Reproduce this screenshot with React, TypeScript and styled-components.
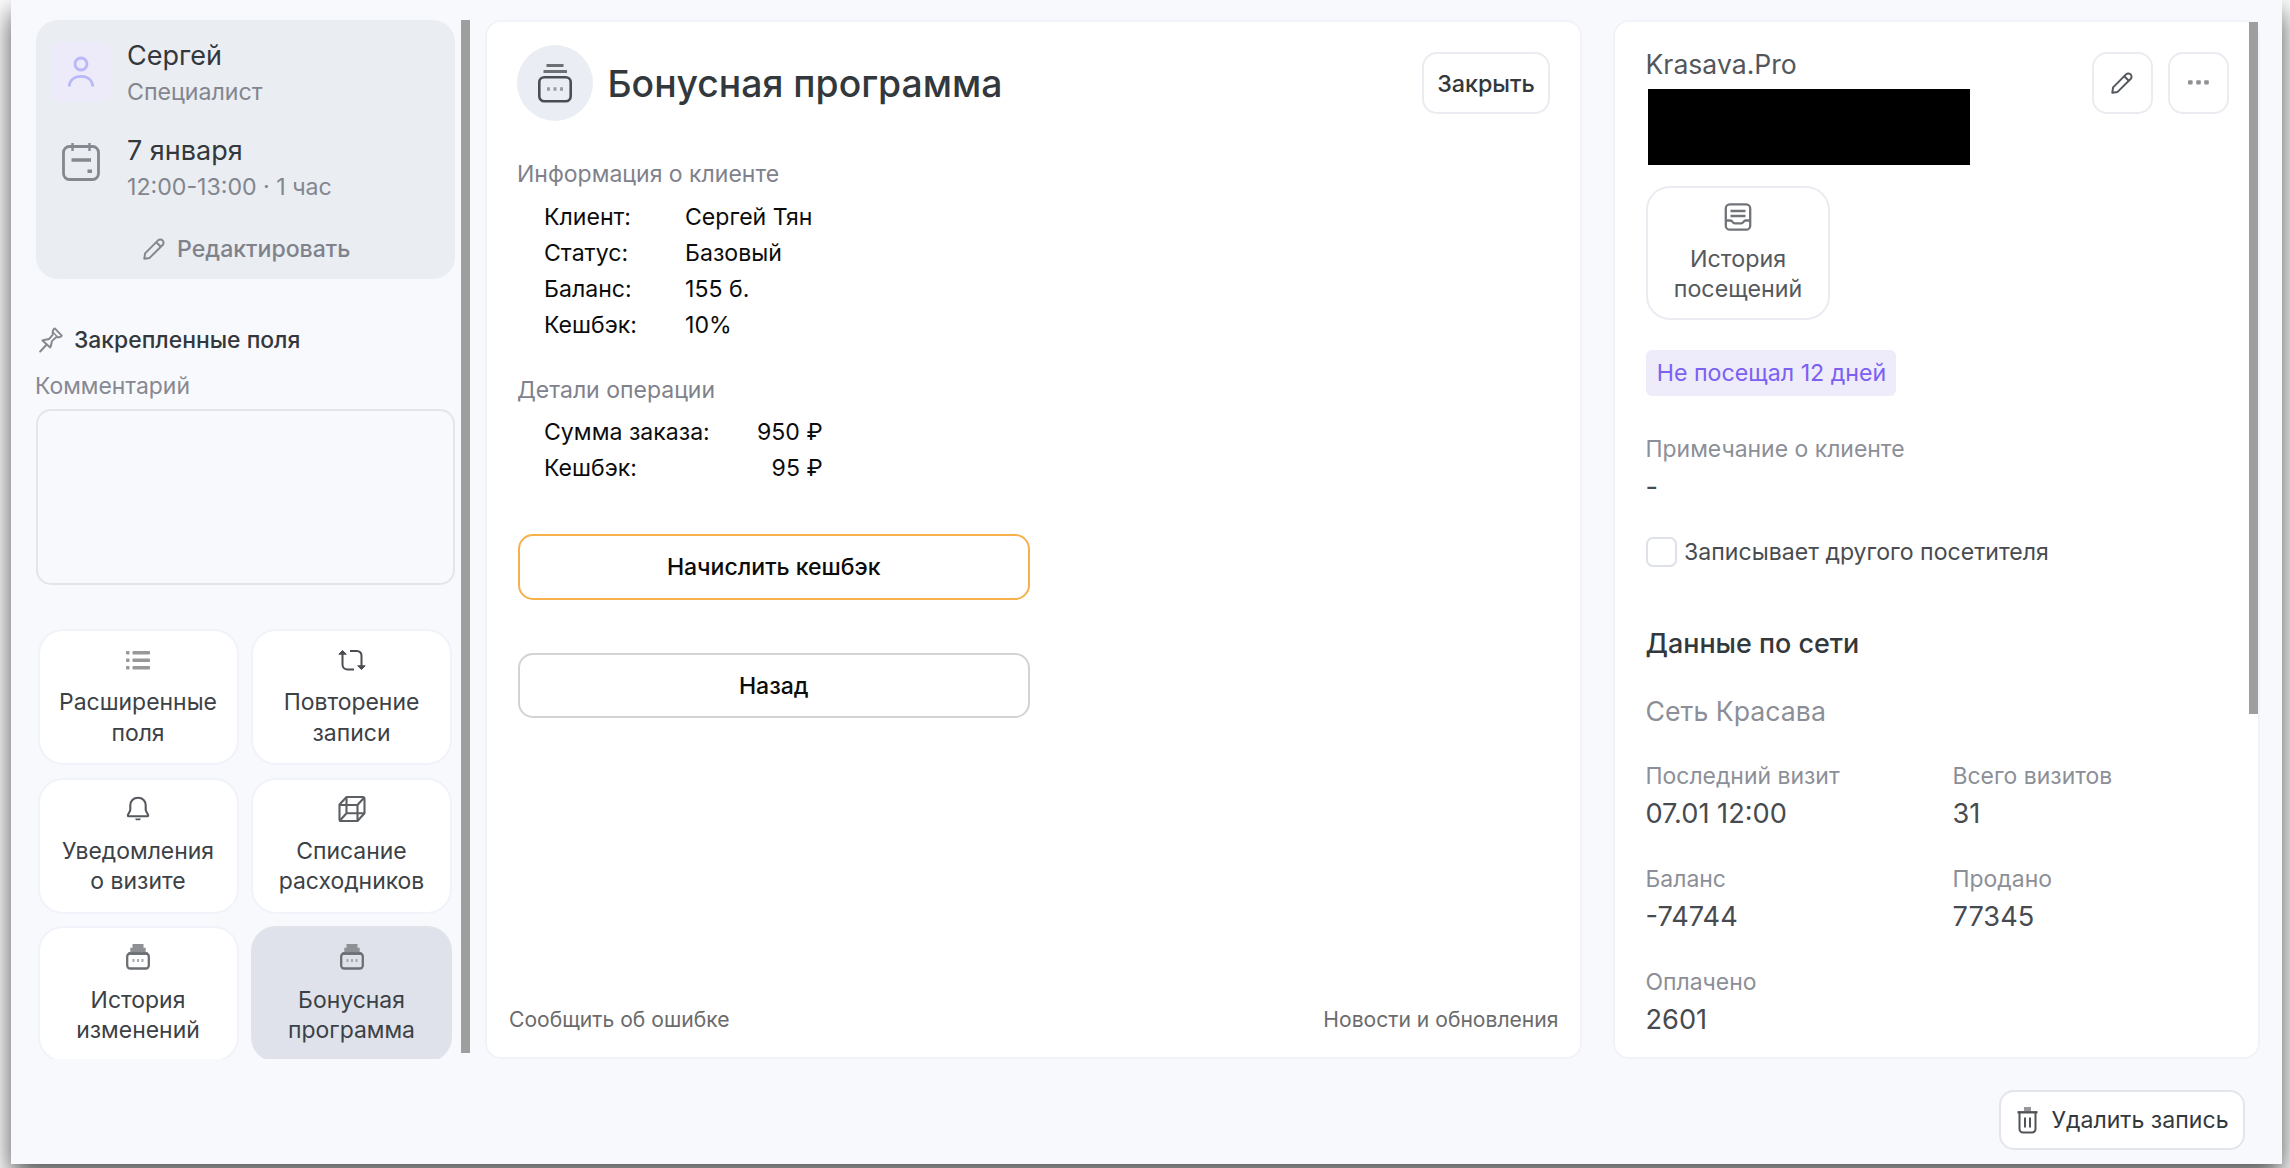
import React from "react";
import styled, { createGlobalStyle, css } from "styled-components";

const GlobalStyle = createGlobalStyle`
  * { box-sizing: border-box; }
  body {
    margin: 0;
    background: #fff;
    overflow: hidden;
    font-family: Inter, "Liberation Sans", sans-serif;
    color: #33383c;
  }
  button { font: inherit; color: inherit; margin: 0; padding: 0; }
`;

const Page = styled.div`
  height: 1168px;
  padding-left: 11px;
  overflow: hidden;
`;

const Window = styled.div`
  width: 2271px;
  height: 1164px;
  padding: 20px 22px 0 25px;
  background: #f8f9fd;
  box-shadow: 0 12px 26px rgba(0, 0, 0, 0.7);
`;

const Columns = styled.div`
  display: flex;
  height: 1039px;
`;

/* ---------- left column ---------- */

const Sidebar = styled.aside`
  display: flex;
  width: 434px;
  margin-right: 15px;
  overflow: hidden;
`;

const SidebarContent = styled.div`
  width: 418.5px;
  flex: none;
`;

const Scrollbar = styled.div<{ $height: number }>`
  flex: none;
  width: 9px;
  height: ${(p) => p.$height}px;
  margin-left: auto;
  background: #9e9e9e;
`;

const VisitCard = styled.section`
  height: 259px;
  padding: 16.5px 15px 0;
  border-radius: 22px;
  background: #eaedf2;
`;

const VisitRow = styled.div`
  display: flex;
  align-items: center;
  gap: 16px;
  height: 74.8px;
  & + & { margin-top: 20.5px; }
`;

const IconCell = styled.div<{ $tinted?: boolean }>`
  display: flex;
  align-items: center;
  justify-content: center;
  width: 60px;
  height: 60px;
  margin-bottom: ${(p) => (p.$tinted ? 3 : 15)}px;
  border-radius: 8px;
  background: ${(p) => (p.$tinted ? "#edebfa" : "transparent")};
`;

const RowTitle = styled.div`
  font-size: 27px;
  line-height: 37.4px;
`;

const RowNote = styled.div`
  font-size: 23.15px;
  line-height: 37.4px;
  color: #83868f;
`;

const EditLink = styled.button`
  display: flex;
  align-items: center;
  justify-content: center;
  gap: 12px;
  width: 100%;
  margin-top: 27px;
  padding-left: 3px;
  border: 0;
  background: none;
  font-size: 23.1px;
  font-weight: 500;
  line-height: 30px;
  color: #7f828b;
`;

const PinnedTitle = styled.h3`
  display: flex;
  align-items: center;
  gap: 11px;
  margin: 45.6px 0 0 3px;
  font-size: 22.9px;
  font-weight: 500;
  line-height: 30px;
`;

const FieldLabel = styled.label`
  display: block;
  margin: 16px 0 8.4px -1px;
  font-size: 22.9px;
  line-height: 30px;
  color: #868991;
`;

const CommentBox = styled.textarea`
  display: block;
  width: 100%;
  height: 176px;
  border: 2px solid #e3e5ea;
  border-radius: 15px;
  background: transparent;
  resize: none;
  outline: none;
`;

const Tiles = styled.div`
  display: grid;
  grid-template-columns: 201px 201px;
  grid-auto-rows: 136px;
  gap: 12.7px 12.500px;
  margin: 44px 0 0 1.500px;
`;

const tileText = css`
  display: flex;
  flex-direction: column;
  align-items: center;
  text-align: center;
  line-height: 30.2px;
`;

const Tile = styled.button<{ $active?: boolean }>`
  ${tileText}
  padding-top: 14px;
  border: 2px solid ${(p) => (p.$active ? "#e0e3ea" : "#f0f3f9")};
  border-radius: 25px;
  background: ${(p) => (p.$active ? "#dfe2ea" : "#fff")};
  font-size: 22.95px;
  color: #3c4145;
  svg { margin-bottom: 12.4px; }
`;

/* ---------- shared ---------- */

const Panel = styled.section`
  border: 2px solid #f1f3f9;
  border-radius: 16px;
  background: #fff;
`;

const OutlineButton = styled.button<{ $width: number }>`
  display: flex;
  flex: none;
  align-items: center;
  justify-content: center;
  width: ${(p) => p.$width}px;
  height: 61.5px;
  border: 2px solid #ebebf1;
  border-radius: 15px;
  background: #fff;
  font-size: 23.3px;
  font-weight: 500;
`;

/* ---------- centre panel ---------- */

const BonusPanel = styled(Panel)`
  display: flex;
  flex-direction: column;
  width: 1097px;
  margin-right: 30.5px;
  padding: 23px 30px 0;
`;

const BonusHeader = styled.header`
  display: flex;
  align-items: center;
  height: 76px;
`;

const RoundIcon = styled.div`
  display: flex;
  align-items: center;
  justify-content: center;
  width: 76px;
  height: 76px;
  margin-right: 14.5px;
  border-radius: 50%;
  background: #eaedf3;
`;

const BonusTitle = styled.h1`
  flex: 1;
  margin: 0;
  padding-top: 1px;
  font-size: 37.3px;
  font-weight: 500;
  line-height: 46px;
`;

const SectionTitle = styled.h2<{ $top: number; $bottom: number }>`
  margin: ${(p) => p.$top}px 0 ${(p) => p.$bottom}px 0;
  font-size: 23px;
  font-weight: 400;
  line-height: 36px;
  color: #7f828c;
`;

const Facts = styled.dl<{ $labels: number; $end?: boolean }>`
  display: grid;
  grid-template-columns: ${(p) => p.$labels}px auto;
  justify-content: start;
  margin: 0 0 0 27px;
  font-size: 23.1px;
  line-height: 35.8px;
  color: #0c0c0c;
  dt, dd { margin: 0; text-align: left; }
  dd { text-align: ${(p) => (p.$end ? "right" : "left")}; }
`;

const WideButton = styled.button<{ $accent?: boolean }>`
  width: 511.5px;
  height: 65.5px;
  border: 2px solid ${(p) => (p.$accent ? "#f6b04c" : "#d3d3d4")};
  border-radius: 15px;
  background: #fff;
  font-size: 23.05px;
  font-weight: 500;
  color: #0c0c0c;
`;

const Actions = styled.div`
  display: flex;
  flex-direction: column;
  gap: 53px;
  margin: 47.2px 0 0 1px;
`;

const BonusFooter = styled.footer`
  display: flex;
  justify-content: space-between;
  margin: auto -8.5px 22px -8px;
  font-size: 21.1px;
  line-height: 30px;
  color: #6b6b6b;
`;

/* ---------- right panel ---------- */

const ClientPanel = styled(Panel)`
  display: flex;
  width: 647px;
`;

const ClientBody = styled.div`
  width: 614px;
  padding: 25px 0 0 31px;
`;

const ClientHeader = styled.header`
  display: flex;
  justify-content: space-between;
`;

const ClientName = styled.div`
  height: 34px;
  font-size: 26.6px;
  line-height: 34px;
  color: #53575b;
`;

const Redacted = styled.div`
  width: 322px;
  height: 76px;
  margin: 8px 0 0 2.5px;
  background: #000;
`;

const HeaderButtons = styled.div`
  display: flex;
  gap: 15px;
  margin-top: 5px;
`;

const HistoryButton = styled.button`
  ${tileText}
  width: 184px;
  height: 134px;
  margin: 21px 0 0 0.5px;
  padding-top: 14px;
  border: 2px solid #ebebf2;
  border-radius: 24px;
  background: #fff;
  font-size: 23.25px;
  color: #55595d;
  svg { margin-bottom: 12px; }
`;

const Tag = styled.span`
  display: block;
  width: 250px;
  height: 46px;
  margin: 30px 0 0 0.5px;
  padding-left: 1px;
  border-radius: 6px;
  background: #eeebfb;
  font-size: 23.2px;
  line-height: 46px;
  text-align: center;
  color: #7b60f2;
`;

const Label = styled.div`
  font-size: 22.95px;
  line-height: 34px;
  color: #8c8f97;
`;

const Value = styled.div`
  font-size: 27.2px;
  line-height: 42.6px;
  color: #474b4f;
`;

const NoteBlock = styled.div`
  margin-top: 35.5px;
`;

const CheckRow = styled.label`
  display: flex;
  align-items: center;
  gap: 7.5px;
  height: 31px;
  margin: 28.5px 0 0 0.5px;
  font-size: 23.1px;
  color: #484c50;
`;

const Checkbox = styled.span`
  width: 30.5px;
  height: 30.5px;
  border: 2px solid #dfe1e9;
  border-radius: 7px;
`;

const NetworkTitle = styled.h2`
  margin: 58.5px 0 0;
  font-size: 26.9px;
  font-weight: 500;
  line-height: 34px;
`;

const NetworkName = styled.div`
  margin-top: 34px;
  font-size: 26.7px;
  line-height: 34px;
  color: #8c8f97;
`;

const Stats = styled.div`
  display: grid;
  grid-template-columns: 307px 1fr;
  row-gap: 26.2px;
  margin-top: 31px;
`;

/* ---------- bottom ---------- */

const BottomBar = styled.footer`
  display: flex;
  justify-content: flex-end;
  margin: 30.5px 15.5px 0 0;
`;

const DeleteButton = styled(OutlineButton)`
  height: 60px;
  gap: 13px;
  padding-left: 3px;
  border-color: #e4e5ec;
  font-size: 23.1px;
  font-weight: 400;
`;

/* ---------- icons ---------- */

const PersonIcon = () => (
  <svg width="28" height="32" viewBox="0 0 28 32" fill="none" stroke="#b9b7f8" strokeWidth="2.8">
    <circle cx="14" cy="8" r="6" />
    <path d="M2.2 30.5C2.6 24 7.5 20.3 14 20.3S25.4 24 25.8 30.5" />
  </svg>
);

const CalendarIcon = () => (
  <svg width="38" height="40" viewBox="0 0 38 40" fill="none" stroke="#85888f" strokeWidth="2.8">
    <rect x="1.5" y="4.5" width="35" height="33" rx="6" />
    <path d="M10.5 1v8M27.5 1v8" strokeWidth="2.4" />
    <path d="M9.5 18h19.5" strokeWidth="3.5" />
    <rect x="25.5" y="27.5" width="4.5" height="3.5" fill="#85888f" stroke="none" />
  </svg>
);

const PencilIcon = ({ color }: { color: string }) => (
  <svg width="22" height="22" viewBox="0 0 22 22" fill="none" stroke={color} strokeWidth="2" strokeLinejoin="round">
    <path d="M1.300 20.700l.8-5.300L15 2.400a3.200 3.200 0 0 1 4.600 4.600L6.600 19.900z" />
    <path d="M13.300 4.200l4.500 4.500" />
  </svg>
);

const PinIcon = () => (
  <svg width="24" height="26" viewBox="0 0 24 26" fill="none" stroke="#85888f" strokeWidth="2" strokeLinejoin="round" strokeLinecap="round">
    <path d="M1.200 24.500l6-6.500M3.500 13.500c3-1.200 5.600-.8 6.700-1.600l3.200-3.800c.8-1.100 0-2.200.5-4 .3-1.300 1.100-2.500 1.900-2.700l6.900 7.200c-.3.800-1.500 1.500-2.600 1.700-1.600.3-2.500-.6-3.500.3l-3.400 3.300c-1 1.100-.4 3.900-2 6.500z" />
    <path d="M13.800 5l5 5.200" strokeWidth="1.400" />
  </svg>
);

const ListIcon = () => (
  <svg width="24" height="30" viewBox="0 0 24 30" fill="#96989a">
    {[6, 13.5, 21].map((y) => (
      <React.Fragment key={y}>
        <rect x="0" y={y} width="3.5" height="3.5" rx=".8" />
        <rect x="6.5" y={y} width="17.5" height="3.5" rx=".8" />
      </React.Fragment>
    ))}
  </svg>
);

const RepeatIcon = () => (
  <svg width="28" height="30" viewBox="0 0 28 30" fill="none" stroke="#4a4e52" strokeWidth="2">
    <path d="M4.500 7v12.500a5 5 0 0 0 5 5H16" />
    <path d="M12 6h7a4.500 4.500 0 0 1 4.500 4.500V23" />
    <path d="M.8 9.200L4.500 5.500l3.800 3.700zM19.700 20.800l3.800 3.700 3.700-3.700z" fill="#4a4e52" strokeWidth="1" />
  </svg>
);

const BellIcon = () => (
  <svg width="24" height="30" viewBox="0 0 24 30" fill="none" stroke="#55595d" strokeWidth="2.1" strokeLinejoin="round">
    <path d="M12 3.800c-4.800 0-7.700 3.200-7.700 7.500v4.500c0 1.800-2.500 4.200-2.500 5.600 0 .6.600.9 1.300.9h17.800c.7 0 1.300-.3 1.300-.9 0-1.400-2.500-3.800-2.500-5.600v-4.500c0-4.300-2.900-7.500-7.700-7.500z" />
    <path d="M9 24.500h6l-1 1.800h-4z" fill="#55595d" stroke="none" />
  </svg>
);

const CubeIcon = () => (
  <svg width="28" height="30" viewBox="0 0 28 30" fill="none" stroke="#5c6064" strokeWidth="2.1" strokeLinejoin="round">
    <path d="M1.500 10.500L8.500 3H25a1.500 1.500 0 0 1 1.500 1.500v14.700L19.500 27H3a1.500 1.500 0 0 1-1.500-1.500z" />
    <path d="M1.500 11h18v16M19.500 11L26 3.800M8.500 3.500v15.700h18M8.500 19.200L2 26.500" />
  </svg>
);

const JarIcon = () => (
  <svg width="24" height="30" viewBox="0 0 24 30" fill="none">
    <path d="M6.500 2h11v3.800h2.200v4.200h2v3h-19.400v-3h2V5.800h2.200z" fill="#8e9093" />
    <rect x="1.200" y="11.500" width="21.600" height="15" rx="3" stroke="#6b6f73" strokeWidth="2.300" />
    <path d="M6.500 18.500h2M11 18.500h2M15.500 18.500h2" stroke="#a6a8aa" strokeWidth="3.200" />
  </svg>
);

const JarIconLarge = () => (
  <svg width="34" height="40" viewBox="0 0 34 40" fill="none" stroke="#4a4e52">
    <path d="M8.500 2.500h17M5.500 8.500h23.500" strokeWidth="3.200" stroke="#6c6f73" />
    <rect x="1.300" y="14.300" width="31.400" height="24" rx="5" strokeWidth="2.600" />
    <path d="M9 26h3M15.500 26h3M22 26h3" strokeWidth="3.400" stroke="#9b9da1" />
  </svg>
);

const InboxIcon = () => (
  <svg width="28" height="30" viewBox="0 0 28 30" fill="none" stroke="#707377" strokeWidth="2.300">
    <rect x="1.800" y="2.300" width="24.400" height="25.400" rx="4" />
    <path d="M6.500 9h15M6.500 14h15" />
    <path d="M2 18.500h4.500c2 0 2 2.800 4.200 2.800h2.600c2.200 0 2.200 0 4 0 2.200 0 2.200-2.800 4.200-2.800H26" />
  </svg>
);

const DotsIcon = () => (
  <svg width="21" height="5" viewBox="0 0 21 5" fill="#8f9194">
    <rect x="0" y=".3" width="4.600" height="4.300" rx="1" />
    <rect x="8.200" y=".3" width="4.600" height="4.300" rx="1" />
    <rect x="16.200" y=".3" width="4.600" height="4.300" rx="1" />
  </svg>
);

const TrashIcon = () => (
  <svg width="21" height="28" viewBox="0 0 21 28" fill="none" stroke="#505458" strokeWidth="2">
    <rect x="7" y="1" width="7" height="4.500" fill="#96989a" stroke="none" />
    <path d="M.5 6.300h20" strokeWidth="2.400" />
    <path d="M2.500 6.500v16.500a3.500 3.500 0 0 0 3.500 3.500h9a3.500 3.500 0 0 0 3.500-3.500V6.500" />
    <path d="M8 11.500v10M13 11.500v10" />
  </svg>
);

const tiles: { lines: [string, string]; icon: React.ReactNode; active?: boolean }[] = [
  { lines: ["Расширенные", "поля"], icon: <ListIcon /> },
  { lines: ["Повторение", "записи"], icon: <RepeatIcon /> },
  { lines: ["Уведомления", "о визите"], icon: <BellIcon /> },
  { lines: ["Списание", "расходников"], icon: <CubeIcon /> },
  { lines: ["История", "изменений"], icon: <JarIcon /> },
  { lines: ["Бонусная", "программа"], icon: <JarIcon />, active: true },
];

const clientFacts = [
  ["Клиент:", "Сергей Тян"],
  ["Статус:", "Базовый"],
  ["Баланс:", "155 б."],
  ["Кешбэк:", "10%"],
];

const operationFacts = [
  ["Сумма заказа:", "950 ₽"],
  ["Кешбэк:", "95 ₽"],
];

const stats = [
  ["Последний визит", "07.01 12:00"],
  ["Всего визитов", "31"],
  ["Баланс", "-74744"],
  ["Продано", "77345"],
  ["Оплачено", "2601"],
];

const FactList = ({ rows }: { rows: string[][] }) => (
  <>
    {rows.map(([name, value]) => (
      <React.Fragment key={name}>
        <dt>{name}</dt>
        <dd>{value}</dd>
      </React.Fragment>
    ))}
  </>
);

export default function App() {
  return (
    <Page>
      <GlobalStyle />
      <Window>
        <Columns>
          <Sidebar>
            <SidebarContent>
              <VisitCard>
                <VisitRow>
                  <IconCell $tinted><PersonIcon /></IconCell>
                  <div>
                    <RowTitle>Сергей</RowTitle>
                    <RowNote>Специалист</RowNote>
                  </div>
                </VisitRow>
                <VisitRow>
                  <IconCell><CalendarIcon /></IconCell>
                  <div>
                    <RowTitle>7 января</RowTitle>
                    <RowNote>12:00-13:00 · 1 час</RowNote>
                  </div>
                </VisitRow>
                <EditLink>
                  <PencilIcon color="#85888f" />
                  Редактировать
                </EditLink>
              </VisitCard>
              <PinnedTitle><PinIcon />Закрепленные поля</PinnedTitle>
              <FieldLabel htmlFor="comment">Комментарий</FieldLabel>
              <CommentBox id="comment" />
              <Tiles>
                {tiles.map((t) => (
                  <Tile key={t.lines[1]} $active={t.active}>
                    {t.icon}
                    <span>{t.lines[0]}</span>
                    <span>{t.lines[1]}</span>
                  </Tile>
                ))}
              </Tiles>
            </SidebarContent>
            <Scrollbar $height={1033} />
          </Sidebar>

          <BonusPanel>
            <BonusHeader>
              <RoundIcon><JarIconLarge /></RoundIcon>
              <BonusTitle>Бонусная программа</BonusTitle>
              <OutlineButton $width={128}>Закрыть</OutlineButton>
            </BonusHeader>
            <SectionTitle $top={35.4} $bottom={8}>Информация о клиенте</SectionTitle>
            <Facts $labels={141}><FactList rows={clientFacts} /></Facts>
            <SectionTitle $top={28.5} $bottom={7.4}>Детали операции</SectionTitle>
            <Facts $labels={213} $end><FactList rows={operationFacts} /></Facts>
            <Actions>
              <WideButton $accent>Начислить кешбэк</WideButton>
              <WideButton>Назад</WideButton>
            </Actions>
            <BonusFooter>
              <span>Сообщить об ошибке</span>
              <span>Новости и обновления</span>
            </BonusFooter>
          </BonusPanel>

          <ClientPanel>
            <ClientBody>
              <ClientHeader>
                <div>
                  <ClientName>Krasava.Pro</ClientName>
                  <Redacted />
                </div>
                <HeaderButtons>
                  <OutlineButton $width={61}><PencilIcon color="#55595d" /></OutlineButton>
                  <OutlineButton $width={61}><DotsIcon /></OutlineButton>
                </HeaderButtons>
              </ClientHeader>
              <HistoryButton>
                <InboxIcon />
                <span>История</span>
                <span>посещений</span>
              </HistoryButton>
              <Tag>Не посещал 12 дней</Tag>
              <NoteBlock>
                <Label>Примечание о клиенте</Label>
                <Value>-</Value>
              </NoteBlock>
              <CheckRow>
                <Checkbox />
                Записывает другого посетителя
              </CheckRow>
              <NetworkTitle>Данные по сети</NetworkTitle>
              <NetworkName>Сеть Красава</NetworkName>
              <Stats>
                {stats.map(([name, value]) => (
                  <div key={name}>
                    <Label>{name}</Label>
                    <Value>{value}</Value>
                  </div>
                ))}
              </Stats>
            </ClientBody>
            <Scrollbar $height={692} />
          </ClientPanel>
        </Columns>
        <BottomBar>
          <DeleteButton $width={246}><TrashIcon />Удалить запись</DeleteButton>
        </BottomBar>
      </Window>
    </Page>
  );
}
